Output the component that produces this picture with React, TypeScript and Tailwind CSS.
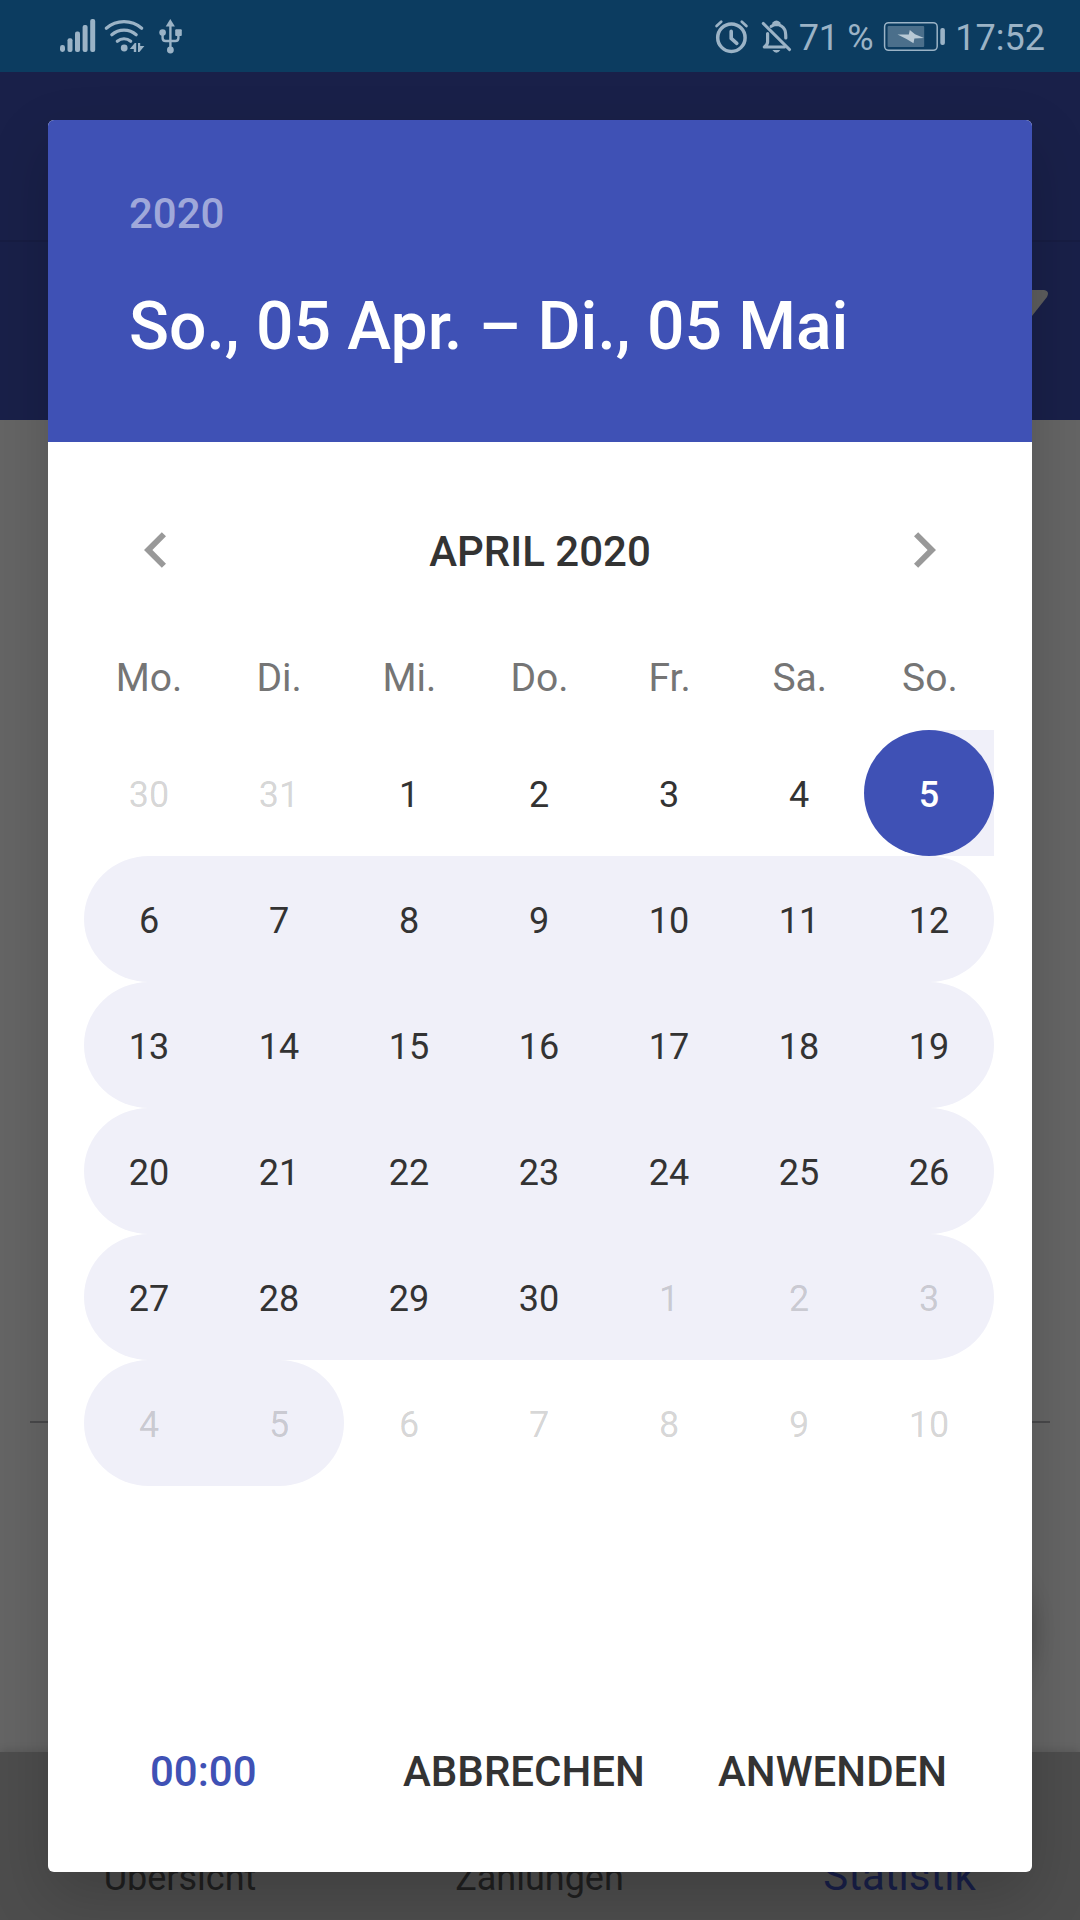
import React from "react";

type Day = { n: number; muted?: boolean };

const weekdays = ["Mo.", "Di.", "Mi.", "Do.", "Fr.", "Sa.", "So."];

const day = (n: number, muted = false): Day => ({ n, muted });
const span = (from: number, to: number, muted = false) =>
  Array.from({ length: to - from + 1 }, (_, i) => day(from + i, muted));

const fullWeeks: Day[][] = [
  span(6, 12),
  span(13, 19),
  span(20, 26),
  [...span(27, 30), ...span(1, 3, true)],
];

function DayText({ d }: { d: Day }) {
  return (
    <div
      className={
        "flex h-[126px] w-[130px] items-center justify-center pt-[3px] text-[36px] " +
        (d.muted ? "text-black/18" : "text-[#333333]")
      }
    >
      {d.n}
    </div>
  );
}

function SignalIcons() {
  return (
    <svg className="ml-[58px] h-[40px] w-[128px] text-[#9bb3c6]" viewBox="58 16 128 40" fill="currentColor">
      <rect x="60" y="45" width="5" height="7" rx="2.4" />
      <rect x="67.5" y="38.3" width="5" height="13.7" rx="2" />
      <rect x="75" y="31.6" width="5" height="20.4" rx="2" />
      <rect x="82.6" y="25" width="5" height="27" rx="2" />
      <rect x="90.2" y="19" width="5" height="33" rx="2" />
      <g fill="none" stroke="currentColor" strokeWidth="3.2" strokeLinecap="round">
        <path d="M106.3 28.3a27 27 0 0 1 35.4 0" />
        <path d="M111.8 34.8a18.4 18.4 0 0 1 24.4 0" />
        <path d="M117.3 41.2a10.4 10.4 0 0 1 13.4 0" />
      </g>
      <circle cx="124.2" cy="48" r="3.4" />
      <path d="M129.8 49l5-6h1.4v9h-2.4v-3zM138 43h2.2v3h4.2l-5 6H138z" />
      <path d="M170.3 19l4.6 7.4h-9.2z" />
      <circle cx="162.6" cy="32.6" r="3.3" />
      <rect x="175.2" y="29.2" width="6.6" height="6.8" rx="1" />
      <circle cx="170.4" cy="50" r="3.4" />
      <path
        d="M170.4 25v25M162.6 33v5q0 3 3 3h9.8q3 0 3-3v-5"
        fill="none"
        stroke="currentColor"
        strokeWidth="2.4"
      />
    </svg>
  );
}

function AlarmBellIcons() {
  return (
    <svg className="h-[40px] w-[80px]" viewBox="714 16 80 40" fill="none" stroke="#9bb3c6" strokeLinecap="round">
      <circle cx="731.4" cy="37.7" r="13.7" strokeWidth="3.5" />
      <path d="M716.6 26l4.6-4.2M746.4 26l-4.6-4.2" strokeWidth="2.8" />
      <path d="M731.2 31.4v7l5.6 5" strokeWidth="3.6" strokeLinejoin="round" />
      <path
        d="M767.6 33.5v8.5q0 2.5-3.2 5h20M771.2 26.4q2-1.7 5-1.9q6 .3 8.4 5q1.2 2 1.2 8.5"
        strokeWidth="3.2"
        strokeLinejoin="round"
      />
      <path d="M773.8 24.5v-1.2q2.6-2.6 5.2 0v1.2" strokeWidth="3" />
      <path d="M763.2 23.4l26.4 26.2" strokeWidth="2.9" />
      <path d="M772.4 50h8q-4 5.6-8 0z" fill="#9bb3c6" stroke="none" />
    </svg>
  );
}

function BatteryIcon() {
  return (
    <svg className="h-[32px] w-[64px]" viewBox="883 20 64 32" fill="none">
      <rect x="884.6" y="22.7" width="52.6" height="27.6" rx="4" stroke="#9bb3c6" strokeWidth="1.5" />
      <rect x="887.6" y="26" width="36.6" height="21" rx="1" fill="#4b6f8b" />
      <rect x="940.3" y="28" width="4.6" height="17" rx="2" fill="#9bb3c6" />
      <path d="M897.5 34.6L908.8 34.6L909.8 30L915 34.3L924 38L914.4 38.5L913.5 43.2L906.5 39z" fill="#b8c9d5" />
    </svg>
  );
}

function Chevron({ right }: { right?: boolean }) {
  return (
    <svg
      className={right ? "h-[36px] w-[22px] rotate-180" : "h-[36px] w-[22px]"}
      viewBox="8 6 7.41 12"
      fill="#999999"
    >
      <path d="M15.41 7.41L14 6l-6 6 6 6 1.41-1.41L10.83 12z" />
    </svg>
  );
}

function StatusBar() {
  return (
    <div className="relative z-20 flex h-[72px] shrink-0 items-center bg-[#0c3c60] text-[36px] text-[#9bb3c6]">
      <SignalIcons />
      <div className="ml-auto flex items-center pr-[35px]">
        <AlarmBellIcons />
        <span className="ml-[5px] whitespace-pre pt-[3px] tracking-[-0.3px]">71 %</span>
        <div className="ml-[10px] flex">
          <BatteryIcon />
        </div>
        <span className="ml-[8px] pt-[3px]">17:52</span>
      </div>
    </div>
  );
}

function Backdrop() {
  return (
    <>
      <div className="h-[168px] shrink-0 bg-[#192049]" />
      <div className="flex h-[180px] shrink-0 justify-end border-t-2 border-[#171d43] bg-[#192049] pr-[32px] pt-[48px]">
        <svg className="h-[48px] w-[48px]" viewBox="0 0 48 48" fill="#5e5e5e">
          <path d="M4 0h40q6 1 3 7L28 31v15l-8-6V31L1 7Q-2 1 4 0z" />
        </svg>
      </div>
      <div className="flex flex-1 flex-col bg-[#656565]">
        <div className="mx-[30px] mt-[1001px] h-[2px] bg-[#49494b]" />
        <div className="mr-[50px] mt-[113px] h-[168px] w-[168px] self-end rounded-full bg-[#192049] shadow-[0_12px_24px_rgba(0,0,0,0.32)]" />
      </div>
      <div className="grid h-[168px] shrink-0 grid-cols-3 bg-[#4d4d4d] pt-[99px] text-center text-[36px] leading-[54px] text-[#1f1f1f] shadow-[0_-2px_8px_rgba(0,0,0,0.12)]">
        <span>Übersicht</span>
        <span className="-ml-px">Zahlungen</span>
        <span className="-ml-px -mt-[2px] text-[42px] text-[#181f48]">Statistik</span>
      </div>
    </>
  );
}

function Calendar() {
  return (
    <div className="mx-[36px] mt-[22px] w-[910px]">
      <div className="flex">
        {[day(30, true), day(31, true), ...span(1, 4)].map((d, i) => (
          <DayText key={i} d={d} />
        ))}
        <div className="h-[126px] w-[130px] bg-linear-to-r from-transparent from-50% to-[#f0f0f9] to-50%">
          <div className="flex h-[126px] items-center justify-center rounded-[50%] bg-[#3f51b5] pt-[3px] text-[36px] font-medium text-white">
            5
          </div>
        </div>
      </div>
      {fullWeeks.map((week, i) => (
        <div key={i} className="flex rounded-[65px/63px] bg-[#f0f0f9]">
          {week.map((d) => (
            <DayText key={d.n} d={d} />
          ))}
        </div>
      ))}
      <div className="flex">
        <div className="flex rounded-[65px/63px] bg-[#f0f0f9]">
          {span(4, 5, true).map((d) => (
            <DayText key={d.n} d={d} />
          ))}
        </div>
        {span(6, 10, true).map((d) => (
          <DayText key={d.n} d={d} />
        ))}
      </div>
    </div>
  );
}

function DateRangeDialog() {
  return (
    <div className="absolute left-[48px] top-[120px] z-10 flex h-[1752px] w-[984px] flex-col overflow-hidden rounded-[6px] bg-white">
      <div className="h-[322px] bg-[#3f51b5] pl-[81px] pt-[70px] font-medium">
        <div className="text-[42px] leading-[48px] text-[#9fa8da]">2020</div>
        <div className="mt-[49px] whitespace-nowrap text-[66px] leading-[80px] text-white">
          So., 05 Ap<span className="tracking-[-7px]">r</span>. – Di., 05 Mai
        </div>
      </div>
      <div className="mt-[73px] flex h-[70px] items-center justify-between px-[96px]">
        <Chevron />
        <span className="pt-[2px] text-[42px] font-medium text-[#333333]">APRIL 2020</span>
        <Chevron right />
      </div>
      <div className="mx-[36px] mt-[63px] grid h-[60px] w-[911px] grid-cols-7 text-center text-[39px] leading-[60px] text-[#757575]">
        {weekdays.map((w) => (
          <span key={w}>{w}</span>
        ))}
      </div>
      <Calendar />
      <div className="mt-[235px] flex h-[100px] items-center pl-[102px] text-[42px] font-medium text-[#333333]">
        <span className="w-[253px] text-[#3f51b5]">00:00</span>
        <span className="w-[315px]">ABBRECHEN</span>
        <span>ANWENDEN</span>
      </div>
    </div>
  );
}

export default function App() {
  return (
    <div className="relative flex h-[1920px] w-[1080px] flex-col overflow-hidden font-['Roboto',sans-serif]">
      <StatusBar />
      <Backdrop />
      {/* dialog elevation shadow, kept beneath the status bar */}
      <div className="absolute left-[48px] top-[120px] h-[1752px] w-[984px] rounded-[6px] shadow-[0_24px_60px_rgba(0,0,0,0.18)]" />
      <DateRangeDialog />
    </div>
  );
}
